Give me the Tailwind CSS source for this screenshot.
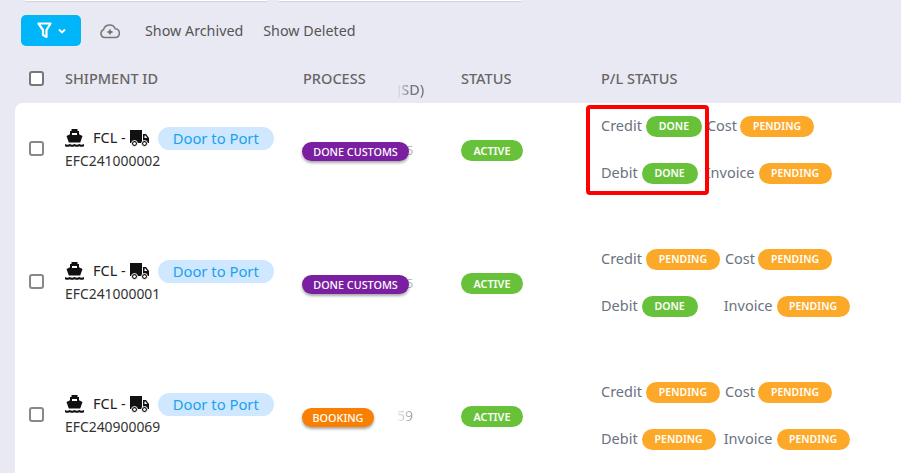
<!DOCTYPE html>
<html lang="en">
<head>
<meta charset="UTF-8">
<title>Shipments</title>
<script src="https://cdn.jsdelivr.net/npm/@tailwindcss/browser@4"></script>
</head>
<body class="bg-[#e9e9f3] font-['Noto_Sans','Open_Sans',sans-serif] overflow-hidden">
<div class="relative w-[901px] h-[473px] overflow-hidden">

  <!-- search inputs cut off at the top -->
  <div class="flex h-[1px] pl-[25px] gap-[12px]">
    <div class="w-[242px] bg-white shadow-[0_1px_1px_rgba(0,0,0,0.12)]"></div>
    <div class="w-[242px] bg-white shadow-[0_1px_1px_rgba(0,0,0,0.12)]"></div>
  </div>

  <!-- toolbar -->
  <div class="flex items-center h-[31px] mt-[14px] pl-[21px]">
    <button class="flex items-center justify-center gap-[6px] w-[60px] h-[31px] rounded-[5px] bg-[#00b6f8]">
      <svg width="15" height="17" viewBox="0 0 15 17" fill="none" stroke="white" stroke-width="2.200" stroke-linejoin="round"><path d="M1.500 1.500h12L9.500 8v7L6 13V8z"/></svg>
      <svg width="8" height="6" viewBox="0 0 8 6" fill="none" stroke="white" stroke-width="1.800"><path d="M1 1.500l3 3 3-3"/></svg>
    </button>
    <svg class="ml-[18px]" width="22" height="16" viewBox="0 0 22 16" fill="none" stroke="#777" stroke-width="1.500"><path d="M5.500 14.500A4 4 0 0 1 4.500 6.800 6.200 6.200 0 0 1 16.300 5.800 4.400 4.400 0 0 1 16.800 14.500z"/><path d="M11 6.500v5M8.500 9h5" stroke-width="1.800"/></svg>
    <span class="ml-[24px] text-[14.300px] leading-[20px] text-[#555]">Show Archived</span>
    <span class="ml-[20px] text-[14.300px] leading-[20px] text-[#555]">Show Deleted</span>
  </div>

  <!-- table head -->
  <div class="grid grid-cols-[65px_238px_158px_140px_1fr] items-center h-[57px] pt-[9px] text-[14.500px] font-medium text-[#666]">
    <div class="pl-[29px]"><span class="block w-[15px] h-[15px] rounded-[3px] border-2 border-[#777] bg-white -translate-y-[1px]"></span></div>
    <div>SHIPMENT ID</div>
    <div class="relative">PROCESS<span class="absolute left-[94px] top-[11px] text-transparent bg-clip-text bg-gradient-to-r from-[#e9e9f3] to-[#777] to-50%">JSD)</span></div>
    <div>STATUS</div>
    <div>P/L STATUS</div>
  </div>

  <!-- table body -->
  <div class="ml-[15px] h-[370px] bg-white rounded-tl-[8px] text-[14.500px]">

    <div class="grid grid-cols-[50px_237px_159px_140px_1fr] items-center h-[133px] pb-[43px]">
      <div class="pl-[14px]"><span class="block w-[15px] h-[15px] rounded-[3px] border-2 border-[#888]"></span></div>
      <div class="pt-[1px]">
        <div class="flex items-center h-[24px] text-[#222]">
          <svg class="w-[19px] h-[18px]" viewBox="0 0 19 18" fill="#111" fill-rule="evenodd"><path d="M6.500 0h6v2H14v3.200l3.500 1.800-2.300 6.500H3.800L1.500 7 5 5.200V2h1.500zM7 4v2h5V4z"/><path d="M0 15q2.300 1.500 4.700 0 2.400 1.500 4.800 0 2.400 1.500 4.800 0 2.400 1.500 4.700 0v2.200q-2.300 1-4.700 0-2.400 1-4.800 0-2.400 1-4.800 0-2.400 1-4.700 0z"/></svg>
          <span class="ml-[9px]">FCL -</span>
          <svg class="ml-[4px] w-[19px] h-[17px]" viewBox="0 0 19 17" fill="#111" fill-rule="evenodd"><path d="M0 0h12v13H0z"/><path d="M13 4h3l3 4v5h-6zM14.500 5.500V8h2.800l-1.900-2.500z"/><path d="M4.500 10.500a3 3 0 1 1 0 6 3 3 0 0 1 0-6zM4.500 12.500a1 1 0 1 0 0 2 1 1 0 0 0 0-2z" stroke="white" stroke-width="1"/><path d="M14.500 10.500a3 3 0 1 1 0 6 3 3 0 0 1 0-6zM14.500 12.500a1 1 0 1 0 0 2 1 1 0 0 0 0-2z" stroke="white" stroke-width="1"/></svg>
          <span class="ml-[9px] flex items-center justify-center w-[116px] h-[23px] rounded-full bg-[#cfe8ff] text-[#1ba1f2] text-[14.800px]">Door to Port</span>
        </div>
        <div class="mt-[1px] text-[13.900px] leading-[20px] text-[#333]">EFC241000002</div>
      </div>
      <div class="relative pt-[6px]">
        <span class="absolute left-[104px] top-[5px] text-[#bbb] text-[13px]">5</span>
        <span class="relative flex items-center justify-center w-[107px] h-[19px] pt-[2px] rounded-full bg-[#7b1fa2] text-white text-[10.800px] font-medium shadow-[0_2px_3px_rgba(0,0,0,0.35)]">DONE CUSTOMS</span>
      </div>
      <div class="pt-[4px]"><span class="flex items-center justify-center w-[62px] h-[21px] pt-[2px] rounded-full bg-[#67c23a] text-white text-[10.800px] font-semibold">ACTIVE</span></div>
      <div class="grid grid-rows-2 gap-y-[26px] pt-[3px] text-[#6b7280]">
        <div class="flex items-center h-[21px]">Credit<span class="ml-[4px] flex items-center justify-center w-[56px] h-[21px] pt-[2px] rounded-full bg-[#67c23a] text-white text-[10.500px] font-semibold">DONE</span><span class="ml-[5px]">Cost</span><span class="ml-[3px] flex items-center justify-center w-[74px] h-[21px] pt-[2px] rounded-full bg-[#fca828] text-white text-[10.500px] font-semibold">PENDING</span></div>
        <div class="flex items-center h-[21px]">Debit<span class="ml-[4px] flex items-center justify-center w-[56px] h-[21px] pt-[2px] rounded-full bg-[#67c23a] text-white text-[10.500px] font-semibold">DONE</span><span class="ml-[8px]">Invoice</span><span class="ml-[4px] flex items-center justify-center w-[73px] h-[21px] pt-[2px] rounded-full bg-[#fca828] text-white text-[10.500px] font-semibold">PENDING</span></div>
      </div>
    </div>

    <div class="grid grid-cols-[50px_237px_159px_140px_1fr] items-center h-[133px] pb-[43px]">
      <div class="pl-[14px]"><span class="block w-[15px] h-[15px] rounded-[3px] border-2 border-[#888]"></span></div>
      <div class="pt-[1px]">
        <div class="flex items-center h-[24px] text-[#222]">
          <svg class="w-[19px] h-[18px]" viewBox="0 0 19 18" fill="#111" fill-rule="evenodd"><path d="M6.500 0h6v2H14v3.200l3.500 1.800-2.300 6.500H3.800L1.500 7 5 5.200V2h1.500zM7 4v2h5V4z"/><path d="M0 15q2.300 1.500 4.700 0 2.400 1.500 4.800 0 2.400 1.500 4.800 0 2.400 1.500 4.700 0v2.200q-2.300 1-4.700 0-2.400 1-4.800 0-2.400 1-4.800 0-2.400 1-4.700 0z"/></svg>
          <span class="ml-[9px]">FCL -</span>
          <svg class="ml-[4px] w-[19px] h-[17px]" viewBox="0 0 19 17" fill="#111" fill-rule="evenodd"><path d="M0 0h12v13H0z"/><path d="M13 4h3l3 4v5h-6zM14.500 5.500V8h2.800l-1.900-2.500z"/><path d="M4.500 10.500a3 3 0 1 1 0 6 3 3 0 0 1 0-6zM4.500 12.500a1 1 0 1 0 0 2 1 1 0 0 0 0-2z" stroke="white" stroke-width="1"/><path d="M14.500 10.500a3 3 0 1 1 0 6 3 3 0 0 1 0-6zM14.500 12.500a1 1 0 1 0 0 2 1 1 0 0 0 0-2z" stroke="white" stroke-width="1"/></svg>
          <span class="ml-[9px] flex items-center justify-center w-[116px] h-[23px] rounded-full bg-[#cfe8ff] text-[#1ba1f2] text-[14.800px]">Door to Port</span>
        </div>
        <div class="mt-[1px] text-[13.900px] leading-[20px] text-[#333]">EFC241000001</div>
      </div>
      <div class="relative pt-[6px]">
        <span class="absolute left-[104px] top-[5px] text-[#bbb] text-[13px]">5</span>
        <span class="relative flex items-center justify-center w-[107px] h-[19px] pt-[2px] rounded-full bg-[#7b1fa2] text-white text-[10.800px] font-medium shadow-[0_2px_3px_rgba(0,0,0,0.35)]">DONE CUSTOMS</span>
      </div>
      <div class="pt-[4px]"><span class="flex items-center justify-center w-[62px] h-[21px] pt-[2px] rounded-full bg-[#67c23a] text-white text-[10.800px] font-semibold">ACTIVE</span></div>
      <div class="grid grid-rows-2 gap-y-[26px] pt-[3px] text-[#6b7280]">
        <div class="flex items-center h-[21px]">Credit<span class="ml-[4px] flex items-center justify-center w-[74px] h-[21px] pt-[2px] rounded-full bg-[#fca828] text-white text-[10.500px] font-semibold">PENDING</span><span class="ml-[5px]">Cost</span><span class="ml-[3px] flex items-center justify-center w-[74px] h-[21px] pt-[2px] rounded-full bg-[#fca828] text-white text-[10.500px] font-semibold">PENDING</span></div>
        <div class="flex items-center h-[21px]">Debit<span class="ml-[4px] flex items-center justify-center w-[56px] h-[21px] pt-[2px] rounded-full bg-[#67c23a] text-white text-[10.500px] font-semibold">DONE</span><span class="ml-[26px]">Invoice</span><span class="ml-[4px] flex items-center justify-center w-[73px] h-[21px] pt-[2px] rounded-full bg-[#fca828] text-white text-[10.500px] font-semibold">PENDING</span></div>
      </div>
    </div>

    <div class="grid grid-cols-[50px_237px_159px_140px_1fr] items-center h-[133px] pb-[43px]">
      <div class="pl-[14px]"><span class="block w-[15px] h-[15px] rounded-[3px] border-2 border-[#888]"></span></div>
      <div class="pt-[1px]">
        <div class="flex items-center h-[24px] text-[#222]">
          <svg class="w-[19px] h-[18px]" viewBox="0 0 19 18" fill="#111" fill-rule="evenodd"><path d="M6.500 0h6v2H14v3.200l3.500 1.800-2.300 6.500H3.800L1.500 7 5 5.200V2h1.500zM7 4v2h5V4z"/><path d="M0 15q2.300 1.500 4.700 0 2.400 1.500 4.800 0 2.400 1.500 4.800 0 2.400 1.500 4.700 0v2.200q-2.300 1-4.700 0-2.400 1-4.800 0-2.400 1-4.800 0-2.400 1-4.700 0z"/></svg>
          <span class="ml-[9px]">FCL -</span>
          <svg class="ml-[4px] w-[19px] h-[17px]" viewBox="0 0 19 17" fill="#111" fill-rule="evenodd"><path d="M0 0h12v13H0z"/><path d="M13 4h3l3 4v5h-6zM14.500 5.500V8h2.800l-1.900-2.500z"/><path d="M4.500 10.500a3 3 0 1 1 0 6 3 3 0 0 1 0-6zM4.500 12.500a1 1 0 1 0 0 2 1 1 0 0 0 0-2z" stroke="white" stroke-width="1"/><path d="M14.500 10.500a3 3 0 1 1 0 6 3 3 0 0 1 0-6zM14.500 12.500a1 1 0 1 0 0 2 1 1 0 0 0 0-2z" stroke="white" stroke-width="1"/></svg>
          <span class="ml-[9px] flex items-center justify-center w-[116px] h-[23px] rounded-full bg-[#cfe8ff] text-[#1ba1f2] text-[14.800px]">Door to Port</span>
        </div>
        <div class="mt-[1px] text-[13.900px] leading-[20px] text-[#333]">EFC240900069</div>
      </div>
      <div class="relative pt-[6px]">
        <span class="absolute left-[95px] top-[3px] text-[14px] text-transparent bg-clip-text bg-gradient-to-r from-[#eee] to-[#999]">59</span>
        <span class="relative flex items-center justify-center w-[72px] h-[19px] pt-[2px] rounded-full bg-[#f97f00] text-white text-[10.800px] font-medium shadow-[0_2px_3px_rgba(0,0,0,0.35)]">BOOKING</span>
      </div>
      <div class="pt-[4px]"><span class="flex items-center justify-center w-[62px] h-[21px] pt-[2px] rounded-full bg-[#67c23a] text-white text-[10.800px] font-semibold">ACTIVE</span></div>
      <div class="grid grid-rows-2 gap-y-[26px] pt-[3px] text-[#6b7280]">
        <div class="flex items-center h-[21px]">Credit<span class="ml-[4px] flex items-center justify-center w-[74px] h-[21px] pt-[2px] rounded-full bg-[#fca828] text-white text-[10.500px] font-semibold">PENDING</span><span class="ml-[5px]">Cost</span><span class="ml-[3px] flex items-center justify-center w-[74px] h-[21px] pt-[2px] rounded-full bg-[#fca828] text-white text-[10.500px] font-semibold">PENDING</span></div>
        <div class="flex items-center h-[21px]">Debit<span class="ml-[4px] flex items-center justify-center w-[74px] h-[21px] pt-[2px] rounded-full bg-[#fca828] text-white text-[10.500px] font-semibold">PENDING</span><span class="ml-[8px]">Invoice</span><span class="ml-[4px] flex items-center justify-center w-[73px] h-[21px] pt-[2px] rounded-full bg-[#fca828] text-white text-[10.500px] font-semibold">PENDING</span></div>
      </div>
    </div>
  </div>

  <!-- red annotation box -->
  <div class="absolute left-[586px] top-[105px] w-[123px] h-[90px] border-[4px] border-[#fe0000] rounded-[4px]"></div>
</div>
</body>
</html>
